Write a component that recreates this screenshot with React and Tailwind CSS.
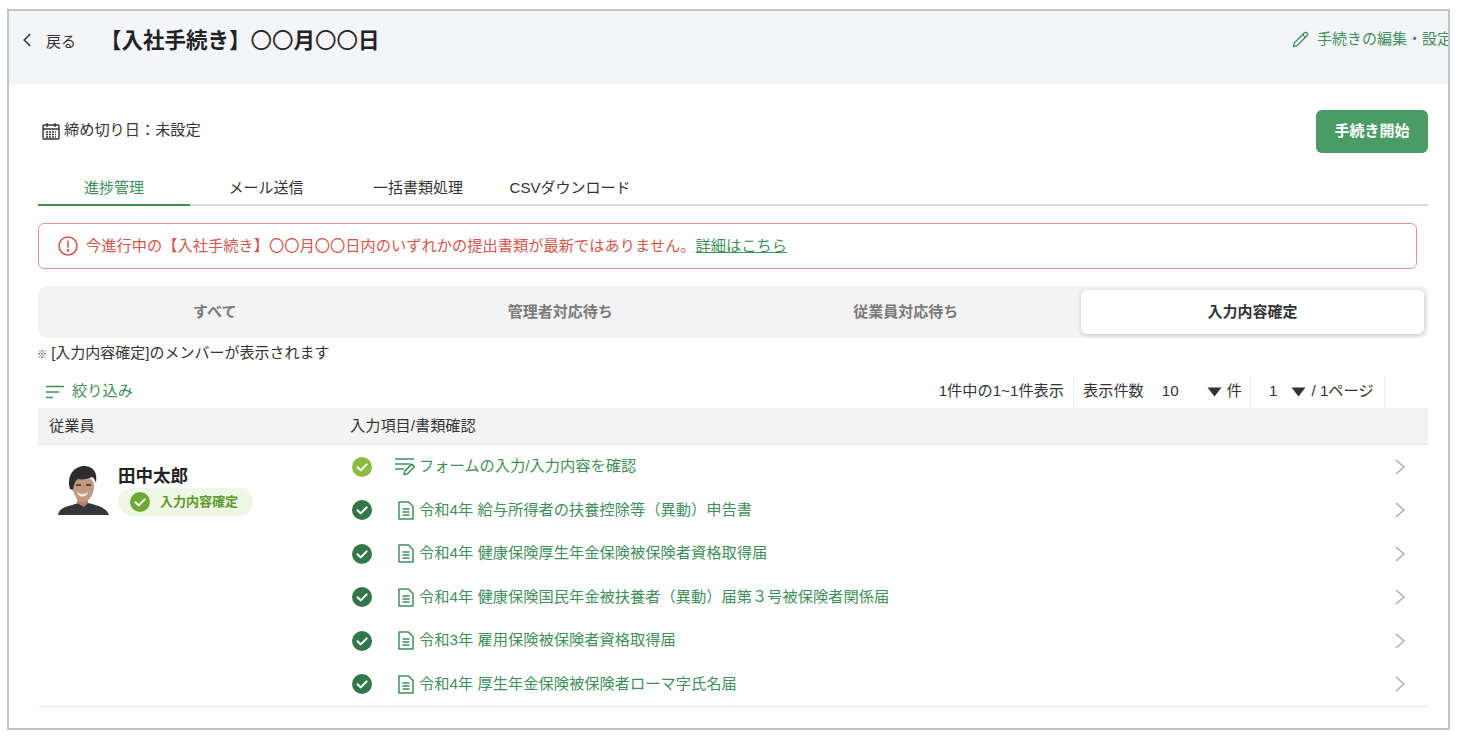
import { ChevronLeft, Pencil } from "lucide-react";

const docs = [
  "令和4年 給与所得者の扶養控除等（異動）申告書",
  "令和4年 健康保険厚生年金保険被保険者資格取得届",
  "令和4年 健康保険国民年金被扶養者（異動）届第３号被保険者関係届",
  "令和3年 雇用保険被保険者資格取得届",
  "令和4年 厚生年金保険被保険者ローマ字氏名届",
];

const font = "font-['Liberation_Sans','Noto_Sans_CJK_JP',sans-serif]";

function CheckCircle({ color, size = 20 }) {
  return (
    <svg width={size} height={size} viewBox="0 0 20 20" className="shrink-0">
      <circle cx="10" cy="10" r="10" fill={color} />
      <path d="M5.500 10.200l3.200 3.200 6-6" fill="none" stroke="#fff" strokeWidth="2" strokeLinecap="round" strokeLinejoin="round" />
    </svg>
  );
}

function DocIcon() {
  return (
    <svg width="16" height="19" viewBox="0 0 16 19" fill="none" stroke="#3f8f5b" strokeWidth="1.500" className="shrink-0">
      <path d="M1 1h9.500L15 5.500V18H1z" strokeLinejoin="round" />
      <path d="M4.500 8h7M4.500 11h7M4.500 14h7" />
    </svg>
  );
}

function FormIcon() {
  return (
    <svg width="22" height="19" viewBox="0 0 22 19" fill="none" stroke="#3f8f5b" strokeWidth="1.500" className="-mr-[2px] shrink-0">
      <path d="M1 2h19M1 7h15M1 12h9" />
      <path d="M10 17.500l.8-3.400 7-7 2.600 2.600-7 7z" strokeLinejoin="round" />
    </svg>
  );
}

function CalendarIcon() {
  return (
    <svg width="18" height="18" viewBox="0 0 18 18" fill="none" stroke="#333" strokeWidth="1.400" className="shrink-0">
      <rect x="1" y="3" width="16" height="14" rx="1" />
      <path d="M1 7h16M5 1v4M13 1v4" />
      <path d="M4 10h10M4 12.500h10M4 15h10" strokeDasharray="2 1" />
    </svg>
  );
}

function AlertIcon() {
  return (
    <svg width="20" height="20" viewBox="0 0 20 20" fill="none" stroke="#d2584c" strokeWidth="1.600" className="shrink-0">
      <circle cx="10" cy="10" r="9" />
      <path d="M10 5.200v6" strokeLinecap="round" />
      <circle cx="10" cy="14.400" r="0.500" fill="#d2584c" />
    </svg>
  );
}

function FilterIcon() {
  return (
    <svg width="18" height="14" viewBox="0 0 18 14" fill="none" stroke="#3f8f5b" strokeWidth="1.600" className="shrink-0">
      <path d="M0 1.500h18M0 7h13M0 12.500h7" />
    </svg>
  );
}

function Avatar() {
  return (
    <svg width="51" height="50" viewBox="0 0 51 50" className="shrink-0">
      <path d="M0 50c1-6 6-8 14-10l9-3 7 1c9 2 19 5 21 12z" fill="#34373a" />
      <path d="M20 30h10v8l-4 4-7-4z" fill="#b08468" />
      <path d="M14 17c0-7 22-8 22 3 0 9-4 17-11 17-7 0-11-10-11-20z" fill="#c39a80" />
      <path d="M19 27c3 2.500 8 2.500 11 0-1 3.500-3 4.500-5.500 4.500S20 30.500 19 27z" fill="#efe9e4" />
      <path d="M12 24C8 10 17 1 26 1c8 0 14 5 12 17-1-3-2-5-4-6-4 2-10 3-14 2-3 2-4 5-5 11z" fill="#2b2c2e" />
      <path d="M18 20h5M28 20h5" stroke="#2b2c2e" strokeWidth="1.500" />
    </svg>
  );
}

function Triangle() {
  return (
    <svg width="15" height="10" viewBox="0 0 15 10" className="shrink-0">
      <path d="M0.500 0.500h14L7.500 9.500z" fill="#333" />
    </svg>
  );
}

function RowChevron() {
  return (
    <svg width="10" height="16" viewBox="0 0 10 16" fill="none" stroke="#a8a8a8" strokeWidth="1.300" className="ml-auto shrink-0">
      <path d="M1 1l8 7-8 7" />
    </svg>
  );
}

function Row({ icon, check, label }) {
  return (
    <div className="flex h-[43.5px] items-center pl-[314px] pr-[23px]">
      <CheckCircle color={check} />
      <div className="flex w-[47px] justify-end pr-[5px]">{icon}</div>
      <span className="text-[15.25px] text-[#3f8f5b]">{label}</span>
      <RowChevron />
    </div>
  );
}

export default function App() {
  return (
    <div className={`${font} h-[742px] w-[1462px] overflow-hidden bg-white pl-[7px] pt-[9px] text-[#333]`}>
      <div className="flex h-[721px] w-[1443px] flex-col overflow-hidden border-2 border-[#c4c4c4] bg-[#f4f5f9]">
        <header className="flex h-[73px] shrink-0 items-start pt-[15px]">
          <ChevronLeft className="ml-[7px] mt-[3px]" size={22} strokeWidth={1.8} />
          <span className="ml-[8px] mt-[5px] text-[15px]">戻る</span>
          <h1 className="ml-[24px] whitespace-nowrap text-[21.5px] font-bold leading-[30px] text-[#222]">
            【入社手続き】<span className="font-normal">〇〇</span>月<span className="font-normal">〇〇</span>日
          </h1>
          <div className="ml-auto mr-[-4px] mt-[2px] flex shrink-0 items-center gap-[8px] text-[15px] text-[#3f8f5b]">
            <Pencil className="mt-[1px]" size={17} strokeWidth={1.8} />
            <span className="whitespace-nowrap">手続きの編集・設定</span>
          </div>
        </header>

        <main className="flex-1 rounded-tl-md bg-white pl-[29px] pr-[20px]">
          <div className="flex h-[69px] items-end justify-between">
            <div className="mb-[11px] ml-[4px] flex items-center gap-[4px] text-[15.2px]">
              <CalendarIcon />
              <span>締め切り日：未設定</span>
            </div>
            <button className="h-[43px] w-[112px] rounded-md bg-[#4a9b64] text-[15px] font-bold text-white">手続き開始</button>
          </div>

          <nav className="mt-[18px] flex h-[35px] border-b-2 border-[#d9d9d9] pt-[6px] text-[15px]">
            <div className="-mb-[2px] w-[152px] border-b-2 border-[#3f8f4f] text-center text-[#3f8f5b]">進捗管理</div>
            <div className="w-[152px] text-center">メール送信</div>
            <div className="w-[152px] text-center">一括書類処理</div>
            <div className="w-[152px] text-center">CSVダウンロード</div>
          </nav>

          <div className="mr-[11px] mt-[17px] flex h-[46px] items-center gap-[8px] rounded-md border border-[#e3958c] pl-[19px] text-[15.25px] text-[#d2584c]">
            <AlertIcon />
            <span>
              今進行中の【入社手続き】〇〇月〇〇日内のいずれかの提出書類が最新ではありません。
              <span className="text-[#3f8f5b] underline">詳細はこちら</span>
            </span>
          </div>

          <div className="mt-[17px] grid h-[52px] grid-cols-4 rounded-lg bg-[#f3f3f3] p-[4px] text-[15px] font-bold text-[#7a7a7a]">
            <div className="flex items-center justify-center">すべて</div>
            <div className="flex items-center justify-center">管理者対応待ち</div>
            <div className="flex items-center justify-center">従業員対応待ち</div>
            <div className="ml-[2.5px] flex items-center justify-center rounded-md bg-white text-[#333] shadow-[0_1px_4px_rgba(0,0,0,0.2)]">入力内容確定</div>
          </div>

          <p className="ml-[-1px] mt-[5px] h-[20px] text-[15px] leading-[20px]"><span className="text-[10px]">※</span> [入力内容確定]のメンバーが表示されます</p>

          <div className="mt-[12px] flex h-[33px] items-stretch text-[15.2px]">
            <div className="flex items-center gap-[8px] pl-[8px] text-[15.25px] text-[#3f8f5b]">
              <FilterIcon />
              <span>絞り込み</span>
            </div>
            <div className="ml-auto flex items-center pr-[43px]">
              <div className="flex h-full items-center border-r border-[#ececec] pr-[9px]">1件中の1~1件表示</div>
              <div className="flex h-full w-[177px] items-center border-r border-[#ececec] pl-[9px]">
                <span>表示件数</span>
                <span className="ml-[18px]">10</span>
                <span className="ml-[28px]"><Triangle /></span>
                <span className="ml-[5px]">件</span>
              </div>
              <div className="flex h-full w-[134px] items-center border-r border-[#ececec] pl-[18px]">
                <span>1</span>
                <span className="ml-[14px]"><Triangle /></span>
                <span className="ml-[5px]">/ 1ページ</span>
              </div>
            </div>
          </div>

          <div className="flex h-[37px] items-center border-b border-[#e8e8e8] bg-[#f3f3f3] text-[15.2px]">
            <span className="ml-[11px] w-[301px]">従業員</span>
            <span>入力項目/書類確認</span>
          </div>

          <div className="relative border-b border-[#e8e8e8]">
            <div className="absolute left-[20px] top-[20px] flex gap-[9px]">
              <Avatar />
              <div>
                <div className="text-[17.5px] font-bold leading-[22px] text-[#222]">田中太郎</div>
                <div className="mt-[1px] flex h-[28px] w-[135px] items-center gap-[10px] rounded-full bg-[#eef6e6] pl-[12px] text-[13px] font-bold text-[#5f9a2f]">
                  <CheckCircle color="#6aaa32" />
                  <span>入力内容確定</span>
                </div>
              </div>
            </div>
            <Row check="#8bbb3f" icon={<FormIcon />} label="フォームの入力/入力内容を確認" />
            {docs.map((d) => (
              <Row key={d} check="#33764a" icon={<DocIcon />} label={d} />
            ))}
          </div>
        </main>
      </div>
    </div>
  );
}
